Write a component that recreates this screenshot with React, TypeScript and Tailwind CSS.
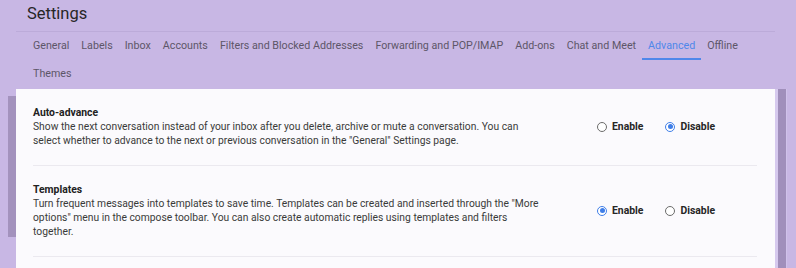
import React from "react";

const tabs = [
  "General",
  "Labels",
  "Inbox",
  "Accounts",
  "Filters and Blocked Addresses",
  "Forwarding and POP/IMAP",
  "Add-ons",
  "Chat and Meet",
  "Advanced",
  "Offline",
  "Themes",
];

function Radio({ checked, label }: { checked: boolean; label: string }) {
  return (
    <div className="flex items-center gap-[5px]">
      {checked ? (
        <span className="flex h-[10px] w-[10px] items-center justify-center rounded-full border-[1.5px] border-[#3f7ee8] bg-white">
          <span className="h-[5px] w-[5px] rounded-full bg-[#3f7ee8]" />
        </span>
      ) : (
        <span className="h-[10px] w-[10px] rounded-full border border-[#6b6b6b] bg-white" />
      )}
      <span className="text-[10.4px] font-bold text-[#262626]">{label}</span>
    </div>
  );
}

function Row({
  title,
  desc,
  enabled,
}: {
  title: string;
  desc: string;
  enabled: boolean;
}) {
  return (
    <div className="flex items-center border-b border-[#ebe9ef] py-[17px]">
      <div className="w-[564px] shrink-0">
        <div className="text-[10.4px] leading-[14px] font-bold text-[#222]">{title}</div>
        <div className="w-[512px] text-[10.3px] leading-[14px] text-[#3a3a3a]">{desc}</div>
      </div>
      <div className="flex items-center gap-[22px]">
        <Radio checked={enabled} label="Enable" />
        <Radio checked={!enabled} label="Disable" />
      </div>
    </div>
  );
}

export default function App() {
  return (
    <div
      className="flex h-[268px] w-[796px] overflow-hidden bg-[#c8b7e4]"
      style={{ fontFamily: "Roboto, 'Liberation Sans', sans-serif" }}
    >
      <div className="w-[16px] shrink-0 pt-[96px] pl-[8px]">
        <div className="h-[141px] w-[8px] bg-[#a392bd]" />
      </div>
      <div className="flex w-[759px] shrink-0 flex-col">
        <div className="h-[32px] border-b border-[#bcabd9] pl-[11px] pt-[3px] text-[16.5px] leading-[22px] text-[#262626]">
          Settings
        </div>
        <div className="flex h-[57px] flex-wrap content-start pl-[11px] pr-[20px]">
          {tabs.map((t) => (
            <div
              key={t}
              className={
                t === "Advanced"
                  ? "flex h-[28px] items-center border-b-2 border-[#4f87ea] px-[6px] pt-[2px] text-[10.7px] text-[#4f87ea]"
                  : "flex h-[28px] items-center border-b-2 border-transparent px-[6px] pt-[2px] text-[10.7px] text-[#5d5668]"
              }
            >
              {t}
            </div>
          ))}
        </div>
        <div className="flex-1 bg-[#fbfafd] px-[17px] pr-[18px]">
          <Row
            title="Auto-advance"
            desc={'Show the next conversation instead of your inbox after you delete, archive or mute a conversation. You can select whether to advance to the next or previous conversation in the "General" Settings page.'}
            enabled={false}
          />
          <Row
            title="Templates"
            desc={'Turn frequent messages into templates to save time. Templates can be created and inserted through the "More options" menu in the compose toolbar. You can also create automatic replies using templates and filters together.'}
            enabled={true}
          />
        </div>
      </div>
      <div className="flex w-[21px] shrink-0 flex-col">
        <div className="h-[89px]" />
        <div className="flex flex-1">
          <div className="w-[3px] bg-[#d6c9ee]" />
          <div className="w-[8px] bg-[#a08fbb]" />
          <div className="w-[10px] border-l border-[#d0c2ea]" />
        </div>
      </div>
    </div>
  );
}
